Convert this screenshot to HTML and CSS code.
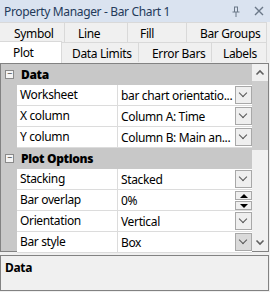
FILE: index.html
```html
<!DOCTYPE html>
<html lang="en">
<head>
    <meta charset="UTF-8">
    <title>Property Manager - Bar Chart 1</title>
    <link rel="stylesheet" href="styles.css">
</head>
<body>
  <div class="panel">
    <div class="titlebar">
      <span class="title">Property Manager - Bar Chart 1</span>
      <svg class="pin" width="10" height="11" viewBox="0 0 10 11"><path d="M3 1h4M3.5 1v5M6.5 1v5M1.5 6h7M5 6v5" stroke="#6b7888" stroke-width="1" fill="none"/></svg>
      <svg class="close" width="10" height="10" viewBox="0 0 10 10"><path d="M1 1l8 8M9 1l-8 8" stroke="#6b7888" stroke-width="1.4"/></svg>
    </div>

    <div class="tabs">
      <div class="tabrow back">
        <span class="tab w65 p14">Symbol</span>
        <span class="tab w63 p13">Line</span>
        <span class="tab w59 p12">Fill</span>
        <span class="tab grow p13">Bar Groups</span>
      </div>
      <div class="tabrow front">
        <span class="tab w62 p13 active">Plot</span>
        <span class="tab w77 p10">Data Limits</span>
        <span class="tab w73 p13">Error Bars</span>
        <span class="tab grow p11">Labels</span>
      </div>
    </div>

    <div class="grid">
      <div class="rows">
        <div class="section"><span class="toggle">&minus;</span><b>Data</b></div>
        <div class="row"><span class="name">Worksheet</span><span class="value">bar chart orientatio...</span><span class="drop"></span></div>
        <div class="row"><span class="name">X column</span><span class="value">Column A: Time</span><span class="drop"></span></div>
        <div class="row"><span class="name">Y column</span><span class="value">Column B: Main an...</span><span class="drop"></span></div>
        <div class="section"><span class="toggle">&minus;</span><b>Plot Options</b></div>
        <div class="row"><span class="name">Stacking</span><span class="value">Stacked</span><span class="drop"></span></div>
        <div class="row"><span class="name">Bar overlap</span><span class="value">0%</span><span class="spin"><i class="up"></i><i class="down"></i></span></div>
        <div class="row"><span class="name">Orientation</span><span class="value">Vertical</span><span class="drop"></span></div>
        <div class="row"><span class="name">Bar style</span><span class="value">Box</span><span class="drop pressed"></span></div>
      </div>
      <div class="scrollbar">
        <svg class="arrow" width="16" height="17" viewBox="0 0 16 17"><path d="M4.5 10.5L8 7l3.5 3.5" stroke="#606060" stroke-width="1.6" fill="none"/></svg>
        <div class="thumb"></div>
        <div class="track"></div>
        <svg class="arrow" width="16" height="17" viewBox="0 0 16 17"><path d="M4.5 6.5L8 10l3.5-3.5" stroke="#606060" stroke-width="1.6" fill="none"/></svg>
      </div>
    </div>

    <div class="desc"><b>Data</b></div>
  </div>
</body>
</html>
```

FILE: styles.css
```css
body { margin: 0; background: #f0f0f0; font-family: "Noto Sans", "Open Sans", sans-serif; font-size: 12px; letter-spacing: -0.35px; color: #000; }
.panel { width: 270px; height: 292px; display: flex; flex-direction: column; }

.titlebar { height: 22px; background: #dae3f0; display: flex; align-items: center; padding: 0 0 0 4px; }
.title { flex: 1; color: #243a5a; white-space: nowrap; }
.pin { margin-right: 13px; }
.close { margin-right: 6px; }

.tabs { background: #f0f0f0; }
.tabrow { display: flex; height: 20px; }
.tab { box-sizing: border-box; height: 20px; line-height: 22px; border-right: 1px solid #d9d9d9; border-top: 1px solid #d9d9d9; background: #f0f0f0; white-space: nowrap; }
.front .tab { line-height: 21px; }
.grow { flex: 1; margin-right: 3px; }
.w65 { width: 65px; }
.w63 { width: 63px; }
.w59 { width: 59px; }
.w62 { width: 62px; }
.w77 { width: 77px; }
.w73 { width: 73px; }
.p10 { padding-left: 10px; }
.p11 { padding-left: 11px; }
.p12 { padding-left: 12px; }
.p13 { padding-left: 13px; }
.p14 { padding-left: 14px; }
.front .active { background: #fff; height: 22px; margin-top: -1px; position: relative; z-index: 1; line-height: 22px; }

.grid { height: 189px; margin-top: 1px; border: 1px solid #828282; display: flex; background: #c8c8c8; width: 269px; box-sizing: border-box; }
.rows { width: 251px; }
.section { height: 21px; display: flex; align-items: center; font-weight: bold; background: #c8c8c8; }
.section b { margin-left: 7px; }
.toggle { box-sizing: border-box; width: 9px; height: 9px; border: 1px solid #8a8a8a; background: #f4f4f4; margin-left: 4px; font-size: 9px; line-height: 6px; text-align: center; font-weight: normal; color: #333; letter-spacing: 0; }
.row { height: 21px; display: flex; align-items: center; margin-left: 16px; background: #fff; border-bottom: 1px solid #dcdcdc; box-sizing: border-box; }
.name { width: 101px; height: 20px; line-height: 20px; padding-left: 3px; box-sizing: border-box; border-right: 1px solid #dcdcdc; }
.value { flex: 1; padding-left: 3px; white-space: nowrap; overflow: hidden; }
.drop { flex: none; box-sizing: border-box; width: 17px; height: 18px; border: 1px solid #a8a8a8; background: #efefef; position: relative; }
.drop::after { content: ""; position: absolute; left: 4px; top: 3px; width: 5px; height: 5px; border-right: 1px solid #555; border-bottom: 1px solid #555; transform: rotate(45deg); }
.pressed { background: #dadada; }
.spin { flex: none; box-sizing: border-box; width: 17px; height: 19px; display: flex; flex-direction: column; gap: 1px; }
.spin i { flex: 1; border: 1px solid #a8a8a8; background: #efefef; position: relative; }
.spin .up::after { content: ""; position: absolute; left: 4px; top: 2px; border: 4px solid transparent; border-top: 0; border-bottom: 4px solid #000; }
.spin .down::after { content: ""; position: absolute; left: 4px; top: 2px; border: 4px solid transparent; border-bottom: 0; border-top: 4px solid #000; }

.scrollbar { width: 16px; background: #f0f0f0; display: flex; flex-direction: column; }
.arrow { flex: none; }
.thumb { height: 69px; background: #cdcdcd; }
.track { flex: 1; }

.desc { margin-top: 3px; height: 36px; width: 269px; box-sizing: border-box; border: 1px solid #828282; padding: 4px 0 0 4px; line-height: 16px; }
```
